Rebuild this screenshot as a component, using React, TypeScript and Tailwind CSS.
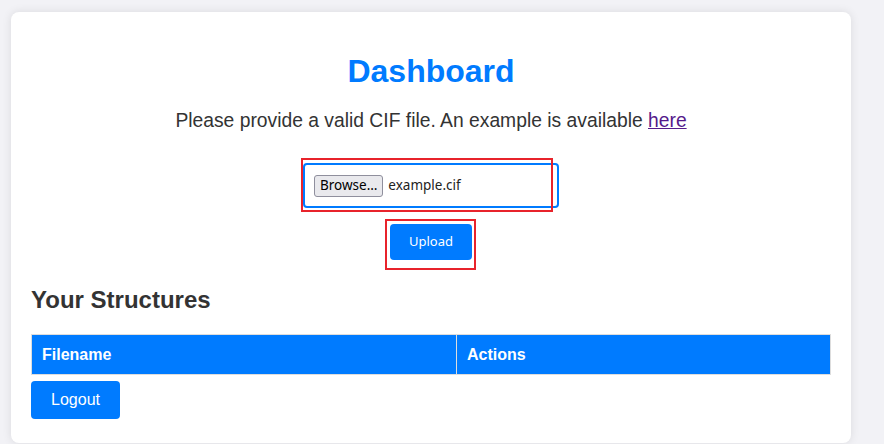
import React from "react";

export default function App() {
  return (
    <div className="min-h-[444px] w-full bg-[#f2f2f6] pt-[12px] pl-[11px] font-['Liberation_Sans',Arial,sans-serif] text-[#333]">
      <div className="w-[840px] rounded-lg bg-white px-[20px] pt-[20px] pb-[24px] shadow-[0_0_10px_rgba(0,0,0,0.1)]">
        <h1 className="mt-[21px] text-center text-[32px] font-bold leading-[37px] text-[#007bff]">
          Dashboard
        </h1>
        <p className="mt-[20px] text-center text-[19.3px] leading-[22px]">
          Please provide a valid CIF file. An example is available{" "}
          <a href="#" className="text-[#551a8b] underline">
            here
          </a>
        </p>

        <div className="mt-[31px] flex flex-col items-center">
          <div className="relative">
            <div className="flex h-[45px] w-[256px] items-center rounded-[4px] border-2 border-[#007bff] px-[9px] font-['Noto_Sans',sans-serif] text-[13.5px]">
              <span className="flex h-[22px] items-center rounded-[3px] border border-[#8f8f9d] bg-[#e9e9ed] px-[5px] text-black">
                Browse…
              </span>
              <span className="ml-[5px] text-[#222]">example.cif</span>
            </div>
            <div className="pointer-events-none absolute left-[-2px] top-[-5px] h-[54px] w-[252px] border-2 border-[#e8232b]" />
          </div>

          <div className="relative mt-[16px]">
            <button className="h-[36px] w-[82px] rounded-[4px] bg-[#007bff] font-['Noto_Sans',sans-serif] text-[13px] text-white">
              Upload
            </button>
            <div className="pointer-events-none absolute left-[-5px] top-[-5px] h-[51px] w-[91px] border-2 border-[#e8232b]" />
          </div>
        </div>

        <h2 className="mt-[26px] text-[24px] font-bold leading-[28px]">
          Your Structures
        </h2>

        <table className="mt-[20px] w-[800px] border-collapse">
          <thead>
            <tr className="bg-[#007bff] text-left text-[16px] font-bold text-white">
              <th className="h-[40px] w-[425px] border border-[#ddd] px-[10px]">Filename</th>
              <th className="h-[40px] border border-[#ddd] px-[10px]">Actions</th>
            </tr>
          </thead>
        </table>

        <button className="mt-[6px] h-[38px] w-[89px] rounded-[4px] bg-[#007bff] text-[16px] text-white">
          Logout
        </button>
      </div>
    </div>
  );
}
